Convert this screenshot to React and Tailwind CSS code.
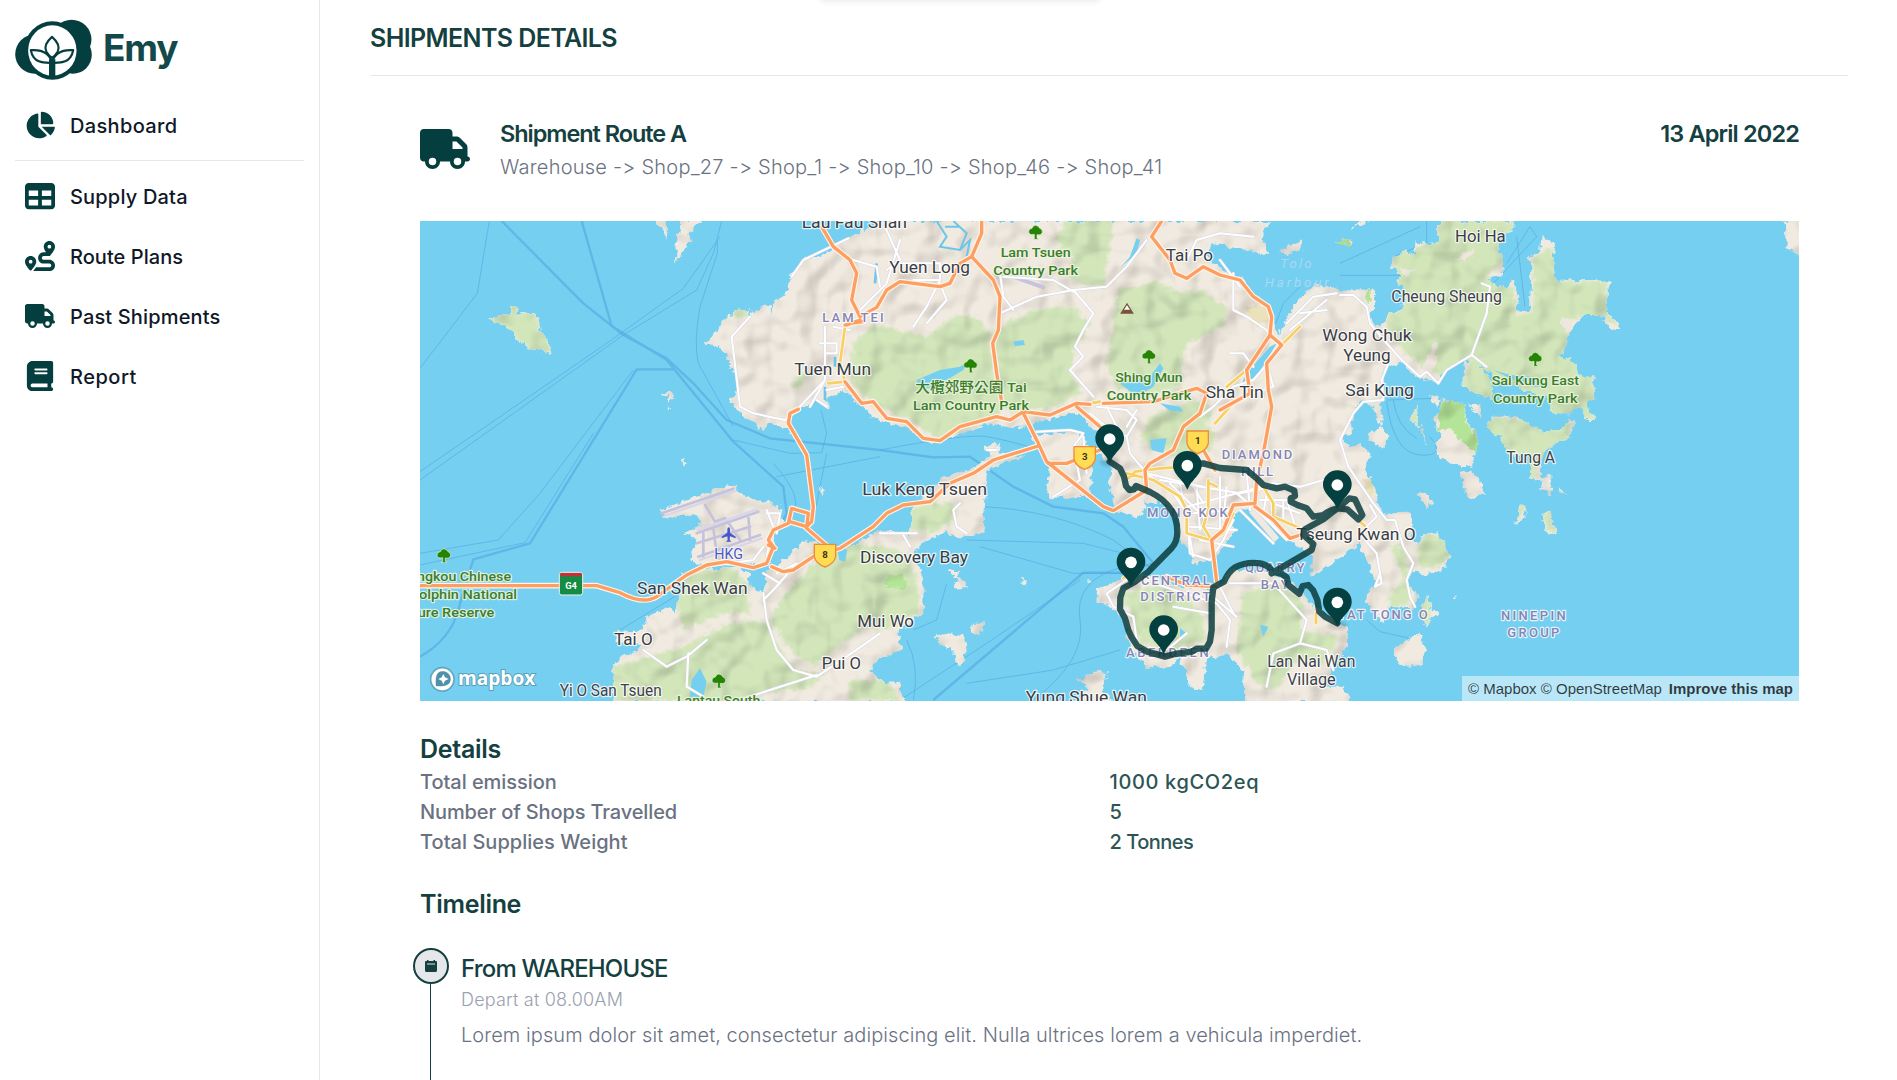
import React from "react";
import { FaBook, FaChartPie, FaRoute, FaTable, FaTruck } from "react-icons/fa6";

const NAV = [
  { label: "Supply Data", Icon: FaTable, tracking: "tracking-[0.18px]" },
  { label: "Route Plans", Icon: FaRoute, tracking: "tracking-[0.05px]" },
  { label: "Past Shipments", Icon: FaTruck, tracking: "tracking-[0.15px]" },
  { label: "Report", Icon: FaBook, tracking: "tracking-[0.5px]" },
];

const DETAILS = [
  ["Total emission", "1000 kgCO2eq", "tracking-[-0.05px]", "tracking-[0.65px]"],
  ["Number of Shops Travelled", "5", "tracking-[-0.13px]", "tracking-normal"],
  ["Total Supplies Weight", "2 Tonnes", "tracking-[0.03px]", "tracking-[-0.5px]"],
];

function NavItem({ label, Icon, tracking }) {
  return (
    <a className="flex h-[60px] items-center gap-[15px] pl-[25px] text-[20px] font-medium text-gray-900">
      <Icon className="h-[30px] w-[30px] text-[#053e3e]" />
      <span className={`pt-[2px] ${tracking}`}>{label}</span>
    </a>
  );
}

function Logo() {
  return (
    <svg viewBox="45 58 231 184" className="h-[61px] w-[77px]" fill="#053e3e">
      <circle cx="104" cy="164" r="59" />
      <circle cx="215" cy="120" r="60" />
      <circle cx="219" cy="166" r="57" />
      <ellipse cx="157" cy="153" rx="85" ry="88" />
      <ellipse cx="157" cy="153" rx="73" ry="76" fill="#fff" />
      <g fill="#fff" stroke="#053e3e" strokeWidth="6.5" strokeLinejoin="round">
        <path d="M156 112C140 126 131 142 139 157Q146 169 156 175Q166 169 173 157C181 142 172 126 156 112Z" />
        <path d="M92 152C120 150 148 156 156 190C128 191 100 190 92 152Z" />
        <path d="M220 152C192 150 164 156 156 190C184 191 212 190 220 152Z" />
      </g>
      <path d="M147 179Q156 183 166 179V234H147Z" />
    </svg>
  );
}

const COASTS = [
  // North-western mainland, joined with the New Territories and Kowloon
  "M1390 3L1330 35 1285 55 1230 95 1150 120 1115 160 1105 210 1060 250 1055 285 1048 252 1005 270 985 292 990 268 945 273 920 295 855 370 915 385 925 430 950 470 955 510 930 545 975 590 1035 635 1045 605 1095 625 1112 638 1102 600 1140 570 1190 540 1230 570 1215 535 1270 510 1310 545 1370 600 1460 625 1530 668 1595 650 1710 612 1780 625 1870 602 1970 578 2030 640 2040 700 2075 740 2070 800 2100 820 2180 850 2210 840 2275 880 2280 960 2305 985 2320 1030 2380 1015 2440 940 2435 890 2470 865 2530 885 2620 970 2680 1010 2670 1075 2760 1010 2820 970 2830 1000 2870 1090 2835 1140 2890 1210 2910 1160 2975 1165 3000 1130 2960 1090 2975 1050 3020 1065 3080 1040 3090 1000 3050 940 3010 945 3000 970 2975 960 2975 900 2960 870 2900 885 2870 850 2865 800 2835 750 2850 700 2825 675 2790 680 2760 650 2790 640 2805 580 2820 545 2860 555 2880 620 2840 650 2890 690 2905 650 2885 620 2880 545 2890 545 2885 480 2900 440 2940 430 2990 470 3030 480 3055 490 3075 450 3140 415 3130 500 3220 540 3210 470 3160 430 3210 460 3310 510 3380 530 3400 580 3450 580 3480 560 3500 600 3523 600 3500 550 3523 540 3520 470 3480 470 3460 425 3410 405 3430 395 3450 330 3495 285 3540 285 3575 330 3600 325 3560 270 3560 230 3570 190 3530 180 3410 182 3400 120 3405 75 3365 50 3360 95 3320 115 3335 130 3330 275 3290 270 3295 220 3275 175 3260 210 3200 180 3245 160 3250 130 3235 90 3235 45 3280 35 3280 3 3060 3 3050 30 3060 60 3035 70 2990 65 2985 105 2960 95 2920 110 2910 140 2940 165 2925 180 2950 200 2960 250 2900 290 2885 320 2855 310 2845 275 2865 270 2865 215 2830 205 2760 210 2690 190 2630 240 2600 290 2575 350 2555 270 2500 220 2470 180 2400 145 2360 110 2380 70 2470 90 2545 105 2525 50 2550 3Z",
  // Lantau
  "M580 1445V1330L650 1290 670 1270 590 1270 590 1235 670 1225 680 1190 750 1160 770 1180 775 1130 800 1090 790 1060 850 1050 950 1040 990 1055 985 1090 1030 1120 1040 1060 1090 1020 1160 960 1200 975 1250 1000 1380 930 1470 940 1480 860 1560 780 1670 740 1710 710 1695 680 1740 670 1735 700 1820 712 1760 722 1700 755 1690 940 1620 955 1580 935 1530 960 1480 990 1510 1080 1510 1180 1460 1215 1430 1240 1450 1290 1380 1310 1350 1350 1390 1390 1440 1385 1450 1445Z",
  // Airport island
  "M718 870L935 793 975 830 1050 850 1090 870 1085 905 1060 930 1065 980 1045 1030 960 1035 820 1030 815 1005 830 960 790 940 845 915 835 885 730 893Z",
  // Tsing Yi
  "M1835 650L1970 630 2010 690 2015 790 2000 830 1895 835 1880 810 1890 740 1860 700Z",
  "M2070 800L2120 780 2180 860 2150 895 2085 870Z",
  // Hong Kong Island
  "M2030 1110L2100 1080 2130 1060 2200 1070 2280 1100 2390 1110 2430 1050 2530 1050 2620 1090 2670 1150 2710 1180 2785 1220 2780 1290 2740 1320 2720 1400 2770 1400 2790 1445 2470 1445 2475 1360 2420 1300 2360 1320 2345 1410 2310 1400 2280 1310 2240 1345 2180 1340 2130 1290 2110 1200 2070 1160 2030 1150Z",
  // Outlying islands
  "M710 3L740 60 740 3Z M785 3L770 75 768 125 815 60 805 40 845 3Z",
  "M200 295L270 285 270 255 288 258 292 285 335 275 355 300 362 335 395 370 395 402 330 385 290 360 285 335 240 310Z",
  "M720 515L755 520 760 535 750 545 740 530Z M742 560L753 565 745 578Z M783 720L795 718 789 742Z M1200 800L1212 812 1203 822Z",
  "M1580 1050L1620 1050 1610 1070 1640 1085 1640 1105 1600 1105 1615 1080Z M1800 1085L1815 1075 1820 1095Z M2000 1080L2010 1076 2015 1088Z",
  "M1650 1225L1670 1205 1695 1205 1685 1235 1660 1242Z M1540 1250L1590 1240 1635 1250 1640 1290 1620 1340 1600 1300Z M1970 1380L2010 1365 2030 1350 2060 1360 2050 1410 2080 1445 1980 1445 2000 1400Z",
  "M3065 640L3040 600 3060 570 3070 540 3130 550 3140 600 3175 660 3170 690 3155 740 3110 735 3055 710 3050 670Z M3030 530L3055 525 3060 545 3045 560Z M3145 545L3185 560 3183 600 3165 575Z",
  "M2990 555L2995 600 3015 675 3010 630 2970 600Z M3120 760L3150 752 3175 775 3195 825 3150 838 3130 800Z M2990 820L3010 815 3038 850 3020 862Z",
  "M3215 590L3290 590 3310 605 3360 635 3420 630 3450 590 3465 610 3440 660 3390 680 3370 700 3360 780 3330 775 3330 700 3270 705 3245 660 3200 625Z",
  "M3360 770L3390 765 3395 820 3365 810Z M3285 910L3300 850 3320 870 3315 895Z M3365 880L3385 875 3400 910 3410 945 3390 945 3370 915Z M3415 805L3440 825 3425 825Z",
  "M2925 1280L2960 1260 3005 1240 3015 1290 3005 1335 2965 1340 2925 1320Z M3000 1180L3020 1120 3035 1165 3060 1190 3025 1195 3020 1225Z M3098 1130L3110 1130 3106 1143Z",
  "M4090 3H4140V105L4100 85 4098 20Z M2580 90L2650 60 2640 90 2600 105Z M2740 70L2790 55 2795 75Z M2790 30L2820 3 2850 3Z",
];

const GREENS = [
  "M2050 200L2080 3 1940 3 1900 60 1960 110 1940 170 1990 190Z",
  "M1720 330L1840 270 1960 260 2010 310 1960 400 1950 460 1990 520 1900 560 1800 580 1740 560Z",
  "M1380 320L1430 330 1520 350 1600 290 1670 290 1710 340 1720 480 1740 580 1600 640 1540 650 1470 600 1380 560 1320 520 1290 470 1300 370 1370 310Z",
  "M2090 210L2160 200 2210 180 2280 220 2340 210 2420 260 2410 320 2300 370 2290 430 2280 500 2160 530 2090 500 2060 430 2080 320Z",
  "M2190 590L2330 540 2380 560 2340 660 2200 690 2160 650Z",
  "M2240 620L2340 610 2390 640 2370 690 2280 720 2240 690Z",
  "M800 1060L940 1045 980 1100 990 1180 900 1180 790 1230 770 1140Z",
  "M580 1340L760 1290 830 1260 930 1210 1040 1200 1080 1290 1130 1350 1210 1360 1180 1400 1040 1420 960 1440 580 1440Z",
  "M1090 1130L1180 1030 1300 970 1380 980 1460 1000 1490 1080 1500 1180 1400 1230 1330 1220 1230 1300 1180 1340 1120 1300 1050 1200Z",
  "M1400 890L1540 850 1600 850 1600 900 1540 940 1420 925Z M1290 1380L1400 1380 1440 1440 1290 1440Z",
  "M2110 1120L2230 1090 2300 1130 2350 1190 2350 1270 2240 1290 2160 1270 2130 1190Z",
  "M2470 1120L2570 1090 2650 1150 2640 1230 2700 1240 2760 1250 2720 1320 2620 1330 2570 1410 2510 1390 2450 1290Z",
  "M2910 975L2950 980 2970 1060 2970 1150 2910 1165 2900 1140 2950 1080Z M3010 950L3060 945 3090 1000 3060 1040 3000 1045 2990 1000Z",
  "M3060 3H3280V35L3235 60 3250 120 3200 170 3280 200 3290 290 3340 275 3340 110 3400 80 3410 185 3560 185 3560 270 3600 325 3540 285 3450 300 3430 395 3520 470 3523 600 3400 580 3200 540 3130 500 3150 410 3060 470 3010 440 2960 400 2900 330 2900 290 2960 250 2930 180 2920 110 3050 60Z",
  "M3200 590L3310 600 3460 610 3440 660 3370 700 3340 780 3200 650Z",
  "M2990 555L2995 600 3015 675 3010 630 2970 600Z M3000 1180L3020 1120 3035 1165 3020 1225Z M3285 910L3300 850 3320 870Z M3365 880L3385 875 3410 945 3370 915Z",
  "M200 295L270 285 270 255 288 258 292 285 335 275 355 300 362 335 395 370 395 402 330 385 290 360 285 335Z",
  "M1110 500L1150 450 1160 480 1130 505Z M2770 555L2870 560 2850 580Z M945 273L985 268 985 292 945 290Z",
];

const BEIGE_GAPS = [
  "M3010 440L3040 370 3050 365 3045 430 3030 470Z M3160 110L3110 120 3130 100 3165 85Z M3420 290L3460 300 3440 340Z M2940 145L2980 150 2960 175Z",
];

const LAKES = [
  "M1490 480L1560 450 1620 440 1640 428 1630 450 1580 480 1540 500 1500 510Z",
  "M2100 490L2190 470 2220 430 2230 445 2200 500 2150 530Z",
  "M2190 660L2240 655 2230 700 2195 690Z M1780 365L1810 360 1815 375 1785 378Z",
  "M2220 550L2280 560 2290 575 2250 572Z M2520 1215L2545 1220 2530 1250Z M2280 1225L2300 1240 2280 1260Z",
  "M815 1380L840 1345 860 1385 850 1430 810 1430Z M1250 975L1282 990 1275 1025 1258 1020Z",
  "M2480 460L2550 380 2570 370 2510 470 2460 500Z",
  "M2150 100L2160 60 2150 55 2130 110 2100 145Z",
  "M3220 450L3280 480 3340 500 3380 500 3340 470 3270 465Z",
];

const FERRIES_WIDE = [
  "M245 3L490 250 610 345 740 415 820 490 920 600 1050 655 1380 690 1540 712 1650 710 1780 800 1900 860 2050 880 2110 920 2200 1030",
  "M485 3L575 318 740 420 830 530 940 665 1090 800 1100 880 1090 900",
  "M0 1310Q90 1260 115 1170T160 1018L330 970 650 448H760",
  "M1540 1440L1990 1058 2110 1058 2200 1030",
];
const FERRIES = [
  "M208 3L172 220 0 445",
  "M905 3L880 100 830 210 610 345 0 780",
  "M900 50L790 205 560 370 0 755",
  "M892 60V100L840 260Q820 370 835 430L940 620",
  "M0 1000L235 960 360 820 640 450",
  "M0 1035L315 968 520 640",
  "M940 660L1110 700 1205 698 1220 640 1203 570",
  "M1070 770L1380 710 M1060 730Q1150 830 1120 880M1220 700L1180 900",
  "M600 1230L780 1120 M600 1140",
  "M1640 960L1990 970 2110 1000 M1680 980L1960 1060 2110 1060",
  "M1440 1440L1700 1270 1980 1080 M2110 1040Q1960 1080 1980 1200T1840 1440",
  "M1640 1390L1900 1350 2100 1290",
  "M1480 1440Q1500 1340 1460 1260M1580 1090L1550 1200 1480 1230",
  "M1380 690Q1640 640 1700 650T1860 690",
  "M1690 860Q1900 870 2080 960L2200 1050",
  "M2760 130L3000 20 M2760 166H2940 M3020 3V70L2920 110M3220 190L3350 50 3330 20 3260 130",
  "M2900 545Q2920 700 3000 705T3030 650M2920 540Q2930 620 2990 655M2900 540L3040 535",
  "M3290 50L3315 260M2840 1200L2880 1235 2970 1255",
  "M2560 330L2590 250 2640 200",
];

const MINOR_ROADS = [
  "M1285 55L1150 120 1115 170M990 290L935 350 960 560 1000 580 1095 600 1140 560 1215 480",
  "M1215 320V480L1170 560M1200 370H1250V400H1215M1240 320L1290 330M1190 540L1220 560M1220 510L1270 500",
  "M1320 270L1400 190 1440 60M1300 120L1370 140 1380 200M1395 20L1440 120 1400 150M1440 130H1560V180H1480",
  "M1740 280L1850 230 1960 210 2060 200 2120 140 2180 60M1960 210L2020 280 1990 330 1965 380 1990 410 1950 450 2020 530",
  "M1560 180L1520 260 1480 320M1560 190L1580 240 1520 310M1740 160L1750 230 1780 270M1750 170L1900 180 1960 215",
  "M2300 120L2330 60 2400 40 2500 50M2440 160V270L2480 290 2540 330 2550 350M2400 120L2460 200",
  "M2570 400L2500 480 2440 500 2380 560 2340 590M2430 400L2470 400 2500 440M2540 430L2560 500 2500 520",
  "M2600 310L2680 230 2750 220M2610 330L2720 240M2640 280L2720 270",
  "M2760 225L2800 225 2840 260 2850 310 2900 370 2945 420 3000 470 3020 455 3055 490 3080 450 3155 405 3200 440M3155 405L3200 280 3210 200 3185 190",
  "M2905 430L2885 480 2890 540 2830 545 2800 580 2760 660 2785 740 2860 850 2900 900 2925 900 2950 980 2980 1030 2960 1080 2970 1130 2985 1160",
  "M2835 960L2870 1000 2885 1090 2865 1100 2880 1060M2810 900L2840 920 2870 890 2850 855",
  "M1620 850L1600 870 1610 920 1640 940M1700 690L1730 690M1380 940L1490 940M1450 945L1470 980",
  "M670 1290L740 1340 800 1310 860 1260M805 1300L800 1400 850 1430M1030 1120L1040 1200 1070 1290 1120 1350 1190 1370 1280 1310 1380 1240M1190 1365L1050 1410 960 1440",
  "M850 1040L1000 1020 1030 980M1040 870L1060 920 1040 1010M1040 880H1080L1070 940M1070 1060L1130 1030 1060 1110 1030 1140M1080 1090L1030 1060",
  "M1850 635L1950 630 1990 640 1960 680 1980 780 1900 830M1990 650L2000 760",
  "M2010 580L2060 620 2120 650 2130 700 2180 760 2300 790 2350 800M2030 560L2120 570 2150 600 2120 650M2060 560L2090 620M2150 570L2120 620",
  "M2180 760L2260 820 2300 880 2310 1000 2370 1020 2410 960 2440 900M2220 780L2460 820 2560 800M2300 860L2560 790 2640 800 2710 780",
  "M2280 790L2320 1010M2400 770L2400 940M2330 800L2340 930M2340 960L2440 980M2310 920L2450 930M2320 880L2440 870M2420 800L2410 900",
  "M2250 790L2360 900M2290 750L2350 850M2480 760L2490 870M2540 820L2530 880M2450 820L2520 880 2600 960",
  "M2500 850L2570 930M2460 870L2560 970M2520 840L2600 840 2630 930M2590 840V900M2560 850L2640 880",
  "M2120 1080L2060 1120 2080 1160 2140 1190 2150 1260M2200 1090L2390 1150 2430 1200 2420 1280M2380 1130L2450 1190M2400 1100L2440 1180",
  "M2430 1090L2560 1090 2660 1200 2640 1270 2560 1300 2540 1400M2640 1270L2720 1290 2740 1350M2260 1160L2370 1180M2240 1290L2300 1240",
];

const HIGHWAYS = [
  "M0 1097H530L600 1118Q670 1155 710 1130L800 1065 860 1035 920 1025 1000 1043 1040 1030 1060 980 1045 960 1060 930 1105 910 1115 865 1165 880 1160 920 1110 905M1045 975L1065 985",
  "M1160 920L1175 905 1180 860 1160 705 1105 610 1110 580 1135 568M1160 925L1230 985M1055 1040L1090 1055 1120 1050 1180 1010 1260 985 1360 920 1400 880 1450 855 1530 845 1590 790 1660 760 1720 720 1855 678",
  "M1205 20L1240 80 1290 120 1310 160 1295 240 1320 290 1370 262 1400 210 1440 185 1560 200 1590 190 1620 130 1655 110 1685 40V3",
  "M1655 110L1720 180 1740 230 1735 330 1718 370 1730 460 1745 545",
  "M1280 315L1320 300M1275 485L1325 550 1360 545 1400 595 1460 605 1510 655 1560 662 1620 620 1730 590 1770 600 1810 575 1890 585 1970 550 2010 553M1275 315L1290 310 1330 305",
  "M1810 580L1855 670 1880 725 2050 860 2080 872 2180 810 2175 750 2190 730 2260 690 2290 620 2340 580 2360 520 2330 505 2280 520 2200 545 2050 550",
  "M1885 730H1940L2040 690M1970 560L2040 620",
  "M2225 3L2195 50 2250 120 2265 160 2300 175 2350 140 2400 165 2460 180 2500 230 2545 260 2555 290 2550 345 2480 450 2490 520 2400 570M2550 345L2585 375M2585 375L2540 430 2545 510 2555 560 2530 700 2510 780 2505 850 2440 855 2410 930 2375 960 2390 1085 M2505 860L2560 900 2610 955 2640 945",
  "M2350 690L2385 750M2240 1070L2300 1095 2390 1100",
];
const YELLOW_ROADS = [
  "M1275 320L1260 430 1275 485 1225 490M2010 550L2040 545M2420 500L2480 450M2385 610L2430 560 2500 510M2590 370L2640 320",
  "M2120 760L2200 780 2280 830 2300 870 2300 940 2370 960 2410 940 2440 880M2125 775L2145 755 2220 745 2300 740M2365 780V870L2350 920 2375 960M2530 800L2560 850 2560 890 2640 925M2820 905L2835 918M2688 1180V1210M2110 1075L2125 1060M2370 790L2390 800",
];

// [text, centre x, baseline, width, kind]
const LABELS = [
  ["Lau Fau Shan", 1303, 24, 316, "place"],
  ["Yuen Long", 1529, 158, 242, "place"],
  ["Tai Po", 2308, 123, 142, "place"],
  ["Tuen Mun", 1238, 466, 230, "place"],
  ["Sha Tin", 2444, 533, 174, "place"],
  ["Luk Keng Tsuen", 1514, 825, 374, "place"],
  ["Discovery Bay", 1482, 1030, 324, "place"],
  ["San Shek Wan", 817, 1122, 332, "place"],
  ["Tai O", 640, 1276, 116, "place"],
  ["Mui Wo", 1397, 1222, 170, "place"],
  ["Pui O", 1264, 1348, 118, "place"],
  ["Yi O San Tsuen", 572, 1428, 306, "small"],
  ["Yung Shue Wan", 1999, 1450, 364, "place"],
  ["Wong Chuk", 2841, 362, 268, "place"],
  ["Yeung", 2841, 422, 142, "place"],
  ["Sai Kung", 2879, 527, 206, "place"],
  ["Hoi Ha", 3181, 66, 152, "place"],
  ["Cheung Sheung", 3080, 247, 332, "small"],
  ["Tung A", 3332, 729, 146, "small"],
  ["Tseung Kwan O", 2808, 961, 358, "place"],
  ["Lan Nai Wan", 2674, 1341, 264, "small"],
  ["Village", 2674, 1396, 146, "small"],
  ["Lam Tsuen", 1847, 112, 210, "park"],
  ["Country Park", 1847, 166, 254, "park"],
  ["大欖郊野公園 Tai", 1653, 515, 334, "park"],
  ["Lam Country Park", 1653, 569, 348, "park"],
  ["Shing Mun", 2187, 487, 202, "park"],
  ["Country Park", 2187, 541, 254, "park"],
  ["Sai Kung East", 3346, 494, 262, "park"],
  ["Country Park", 3346, 548, 254, "park"],
  ["ngkou Chinese", 132, 1083, 282, "park"],
  ["olphin National", 144, 1137, 294, "park"],
  ["ure Reserve", 108, 1191, 230, "park"],
  ["Lantau South", 896, 1456, 250, "park"],
  ["LAM TEI", 1299, 306, 184, "district"],
  ["DIAMOND", 2511, 717, 212, "district"],
  ["HILL", 2511, 768, 96, "district"],
  ["MONG KOK", 2302, 892, 242, "district"],
  ["CENTRAL", 2266, 1094, 206, "district"],
  ["DISTRICT", 2266, 1144, 210, "district"],
  ["QUARRY", 2564, 1056, 178, "district"],
  ["BAY", 2564, 1106, 84, "district"],
  ["ABERDEEN", 2242, 1312, 248, "district"],
  ["TAT TONG O", 2888, 1197, 270, "district"],
  ["NINEPIN", 3340, 1201, 194, "district"],
  ["GROUP", 3340, 1251, 156, "district"],
  ["HKG", 926, 1016, 86, "airport"],
  ["Tolo", 2628, 143, 94, "water"],
  ["Harbour", 2630, 201, 192, "water"],
];

const LABEL_STYLE = {
  place: "fill-[#3a3d44] stroke-[#ffffffcc] text-[49px] font-normal",
  small: "fill-[#3f4248] stroke-[#ffffffcc] text-[47px] font-normal",
  park: "fill-[#3c7d2c] stroke-[#ecf5dfdd] text-[41px] font-medium",
  district: "fill-[#8685b3] stroke-[#ffffffcc] text-[39px] font-medium",
  airport: "fill-[#4a5ac6] stroke-[#ffffffaa] text-[44px] font-normal",
  water: "fill-[#a9d9f3] stroke-[#75cff000] text-[40px] italic",
};

const TREES = [
  [1847, 38], [1652, 438], [2187, 411], [3346, 419], [72, 1008], [897, 1384],
];

const PINS = [
  [2069, 657], [2302, 737], [2133, 1027], [2231, 1230], [2752, 795], [2752, 1147],
];

function Shield({ x, y, n }) {
  return (
    <g transform={`translate(${x} ${y})`}>
      <path d="M-32-32H32V5Q27 27 0 36Q-27 27-32 5Z" fill="#ffdc52" stroke="#f08a3c" strokeWidth="4" />
      <text textAnchor="middle" y="8" className="fill-[#3b3516] text-[29px] font-bold">{n}</text>
    </g>
  );
}

function RouteMap() {
  return (
    <svg viewBox="0 3 4137 1440" className="block h-[480px] w-[1379px] font-['Roboto','Noto_Sans_CJK_TC',sans-serif]">
      <defs>
        <filter id="relief" x="0" y="0" width="4137" height="1443" filterUnits="userSpaceOnUse" colorInterpolationFilters="sRGB">
          <feTurbulence type="fractalNoise" baseFrequency="0.05" numOctaves="3" seed="4" result="rough" />
          <feDisplacementMap in="SourceGraphic" in2="rough" scale="26" xChannelSelector="R" yChannelSelector="G" result="coast" />
          <feTurbulence type="fractalNoise" baseFrequency="0.011" numOctaves="2" seed="9" result="hills" />
          <feDiffuseLighting in="hills" surfaceScale="34" diffuseConstant="1.1" lightingColor="#ffffff" result="lit">
            <feDistantLight azimuth="225" elevation="62" />
          </feDiffuseLighting>
          <feColorMatrix in="lit" values="0.24 0 0 0 0.755 0 0.24 0 0 0.755 0 0 0.24 0 0.745 0 0 0 1 0" result="soft" />
          <feBlend in="coast" in2="soft" mode="multiply" result="shade" />
          <feComposite in="shade" in2="coast" operator="in" />
        </filter>
        <filter id="feather" x="-5%" y="-5%" width="110%" height="110%"><feGaussianBlur stdDeviation="5" /></filter>
        <clipPath id="land">{COASTS.map((d) => <path key={d} d={d} />)}</clipPath>
      </defs>
      <rect y="3" width="4137" height="1440" fill="#75cff0" />

      <g fill="none" stroke="#4a9ee0" strokeLinejoin="round">
        <g strokeWidth="7" opacity="0.5">{FERRIES_WIDE.map((d) => <path key={d} d={d} />)}</g>
        <g strokeWidth="3" opacity="0.5">{FERRIES.map((d) => <path key={d} d={d} />)}</g>
      </g>

      <g filter="url(#relief)">
        <g fill="#f2ebe3">{COASTS.map((d) => <path key={d} d={d} />)}</g>
        <g clipPath="url(#land)">
          <g fill="#d3e7bd" filter="url(#feather)">{GREENS.map((d) => <path key={d} d={d} />)}</g>
          <g fill="#f0e8e0">{BEIGE_GAPS.map((d) => <path key={d} d={d} />)}</g>
          <path fill="#b5e59a" d="M3050 570L3080 540 3130 550 3140 610 3175 660 3170 695 3120 660 3095 630 3060 635Z M2740 70L2790 50 2790 90Z M2835 225L2850 205 2855 240 2840 250Z M1400 1070L1450 1060 1460 1100 1400 1105Z" />
          <path fill="#e9dfae" d="M2470 260L2540 260 2550 300 2510 320Z M2830 770L2860 780 2860 830 2830 800Z" opacity=".7" />
        </g>
      </g>
      <g fill="#75cff0">{LAKES.map((d) => <path key={d} d={d} />)}</g>
      <path d="M1550 3L1580 50 1560 80 1620 90 1650 60 1640 110M1600 3L1640 40 1620 90M1575 20H1620M1655 110L1700 160" fill="none" stroke="#6cc6ea" strokeWidth="6" />
      <path d="M1370 130L1365 190M1215 500V540M1245 410V440" stroke="#6cc6ea" strokeWidth="8" />
      <path d="M2495 870L2570 960" stroke="#efe9e1" strokeWidth="20" />

      <g fill="none" strokeLinejoin="round" strokeLinecap="round">
        <path d="M725 880L940 806M855 855L885 905 915 895M830 940L1015 875M835 1010L1020 945M830 970L990 920M850 940V1010M880 925L890 1000M920 900L960 960M985 885L990 960" stroke="#c5c2dc" strokeWidth="8" />
        <path d="M732 888L944 814M835 930L1010 868M840 1020L1024 955" stroke="#d9d6e8" strokeWidth="7" />
        <path d="M1780 170L1870 202" stroke="#c8c3dd" strokeWidth="12" />
        <g stroke="#d7d7e4" strokeWidth="9">{MINOR_ROADS.map((d) => <path key={d} d={d} />)}</g>
        <g stroke="#ffffff" strokeWidth="6">{MINOR_ROADS.map((d) => <path key={d} d={d} />)}</g>
        <g stroke="#fff8ee" strokeWidth="13">{YELLOW_ROADS.map((d) => <path key={d} d={d} />)}</g>
        <g stroke="#f7cf62" strokeWidth="8">{YELLOW_ROADS.map((d) => <path key={d} d={d} />)}</g>
        <g stroke="#fff3e6" strokeWidth="17">{HIGHWAYS.map((d) => <path key={d} d={d} />)}</g>
        <g stroke="#fd9f63" strokeWidth="10">{HIGHWAYS.map((d) => <path key={d} d={d} />)}</g>
      </g>

      {TREES.map(([x, y]) => (
        <path key={`${x}-${y}`} transform={`translate(${x} ${y})`} d="M-4 18V5Q-21 9-21-4Q-19-13-11-13Q-8-22 0-22Q9-21 12-13Q21-11 20-1Q17 9 4 6V16L9 20H-9Z" fill="#268405" stroke="#e6f3d8" strokeWidth="2" />
      ))}
      <path d="M2121 252L2104 279H2138Z" fill="#fff" stroke="#79513c" strokeWidth="4" />
      <path d="M2111 269H2131L2138 279H2104Z" fill="#79513c" />
      <path d="M926 922Q930 922 930 932V938L947 950V955L930 949 929 960 934 965H918L923 960 922 949 905 955V950L922 938V932Q922 922 926 922Z" fill="#4257cc" />

      {LABELS.map(([text, x, y, width, kind]) => (
        <text key={text + x + y} x={x - width / 2} y={y} textLength={width} strokeWidth="7" strokeLinejoin="round" paintOrder="stroke" lengthAdjust={kind === "district" || kind === "water" ? "spacing" : "spacingAndGlyphs"} className={LABEL_STYLE[kind]}>
          {text}
        </text>
      ))}

      <Shield x={1215} y={1005} n="8" />
      <Shield x={1994} y={712} n="3" />
      <Shield x={2333} y={665} n="1" />
      <rect x="418" y="1057" width="70" height="68" rx="7" fill="#158c43" stroke="#e8f4ec" strokeWidth="3" />
      <path d="M420 1069V1064Q420 1059 426 1059H480Q486 1059 486 1064V1069Z" fill="#c82f36" />
      <text x="453" y="1107" textAnchor="middle" className="fill-white text-[28px] font-bold">G4</text>

      <g transform="translate(1920 540)" fill="none" stroke="#0a3c3d" strokeOpacity="0.85" strokeWidth="19" strokeLinejoin="round" strokeLinecap="round">
        <path d="M149 185L180 205 192 230 198 258 208 270 222 268 228 258 270 276Q315 298 335 332Q352 360 352 395Q352 425 335 444L265 515 225 545 190 565 181 592 180 628 195 655 205 690 215 712 232 738 262 755 315 770 345 762 395 755 410 746 438 746 450 725 455 690V605L460 562 492 545Q505 515 525 502Q560 484 600 490Q625 495 640 516L665 522 680 532 685 555 718 581 728 558 745 555 760 572 772 600 778 635 795 650 832 670M635 520L755 450 760 432 730 405 735 388 790 358 832 325 862 328 895 358 907 345 885 298 868 295 832 325Q812 328 790 345L760 350 740 325 712 315 692 305 692 295 705 288 703 272 675 260 650 265 610 255 590 235 560 210 480 204 430 190 395 195" />
      </g>

      {PINS.map(([x, y]) => (
        <g key={`${x}-${y}`} transform={`translate(${x} ${y})`}>
          <ellipse cx="1" cy="70" rx="30" ry="13" fill="#000" opacity=".13" filter="url(#feather)" />
          <path d="M0 72C-5 63-8 54-17 45C-32 28-43 16-43-2A43 42 0 0 1 43-2C43 16 32 28 17 45C8 54 5 63 0 72Z" fill="#04403f" />
          <circle r="17.5" fill="#fff" />
        </g>
      ))}

      <g stroke="#4f91a8" strokeOpacity=".75">
        <circle cx="67" cy="1378" r="35" fill="#fff" strokeWidth="5" />
        <path d="M48 1398C45 1362 54 1354 70 1354A23 23 0 0 1 92 1377C90 1396 76 1400 48 1398Z" fill="#4f91a8" strokeWidth="1" />
        <path d="M70 1362L75 1372 86 1377 75 1382 70 1393 65 1382 55 1377 65 1372Z" fill="#fff" stroke="none" />
        <text x="114" y="1395" textLength="232" lengthAdjust="spacingAndGlyphs" strokeWidth="6" paintOrder="stroke" className="fill-white font-['Open_Sans',sans-serif] text-[59px] font-bold">mapbox</text>
      </g>
    </svg>
  );
}

function TimelineEntry() {
  return (
    <div className="ml-[-7px] mt-[26px] flex">
      <div className="flex w-9 flex-col items-center">
        <div className="flex size-9 shrink-0 items-center justify-center rounded-full border-2 border-[#14403f] bg-gray-200">
          <svg viewBox="0 0 12 12" className="size-3" fill="#14403f">
            <path d="M2 1V0H3.5V1H8.5V0H10V1H11Q12 1 12 2V10.5Q12 12 10.5 12H1.5Q0 12 0 10.5V2Q0 1 1 1ZM2 3.5V4.5H10V3.5Z" fillRule="evenodd" />
          </svg>
        </div>
        <div className="mr-[1px] h-[200px] w-px bg-[#14403f]" />
      </div>
      <div className="ml-3 pt-[3px]">
        <h3 className="text-[24px] leading-9 font-medium tracking-[-0.82px] text-[#14403f]">From WAREHOUSE</h3>
        <p className="text-[18px] leading-[26px] font-light tracking-[0.2px] text-gray-400">Depart at 08.00AM</p>
        <p className="mt-[7px] text-[20px] leading-[30px] font-light tracking-[0.07px] text-gray-500">
          Lorem ipsum dolor sit amet, consectetur adipiscing elit. Nulla ultrices lorem a vehicula imperdiet.
        </p>
      </div>
    </div>
  );
}

export default function App() {
  return (
    <div className="relative flex h-[1080px] w-[1897px] overflow-hidden bg-white font-['Inter',sans-serif]">
      <div className="absolute -top-4 left-[820px] h-4 w-[280px] rounded shadow-[0_1px_6px_rgba(0,0,0,0.1)]" />
      <aside className="w-[320px] shrink-0 border-r border-gray-200">
        <div className="flex h-[95px] items-start gap-[11px] pt-[19px] pl-[15px]">
          <Logo />
          <span className="pt-[1px] text-[37px] leading-[56px] font-bold tracking-[-1.2px] text-[#14494a]">Emy</span>
        </div>
        <nav>
          <NavItem label="Dashboard" Icon={FaChartPie} tracking="tracking-[0.35px]" />
          <hr className="mr-[15px] ml-[15px] mt-[5px] mb-[5px] border-gray-200" />
          {NAV.map((item) => <NavItem key={item.label} {...item} />)}
        </nav>
      </aside>

      <main className="w-[1577px] pr-[49px] pl-[50px]">
        <h1 className="flex h-[76px] items-center border-b border-gray-200 pt-[2px] text-[25px] font-semibold tracking-[-0.6px] text-[#14403f]">
          SHIPMENTS DETAILS
        </h1>
        <div className="w-[1429px] pl-[50px]">
          <header className="flex h-[145px] pt-10">
            <FaTruck className="mt-2 h-[50px] w-[50px] text-[#053e3e]" />
            <div className="ml-[30px] flex-1">
              <h2 className="text-[23.5px] leading-9 font-semibold tracking-[-1.05px] text-[#14403f]">Shipment Route A</h2>
              <p className="text-[20px] leading-[30px] font-light tracking-[0.23px] text-gray-500 [font-feature-settings:'calt'_0]">
                Warehouse -&gt; Shop_27 -&gt; Shop_1 -&gt; Shop_10 -&gt; Shop_46 -&gt; Shop_41
              </p>
            </div>
            <time className="text-[23.5px] leading-9 font-semibold tracking-[-0.85px] text-[#14403f]">13 April 2022</time>
          </header>

          <div className="relative h-[480px] w-[1379px] overflow-hidden">
            <RouteMap />
            <div className="absolute right-0 bottom-0 flex h-[25px] w-[337px] items-center justify-between bg-white/50 px-[6px] pt-px font-['Liberation_Sans',sans-serif] text-[15px] whitespace-nowrap text-black/75">
              <span>© Mapbox © OpenStreetMap</span>
              <b>Improve this map</b>
            </div>
          </div>

          <section className="pt-[30px]">
            <h2 className="text-[25px] leading-9 font-semibold tracking-[-0.3px] text-[#14403f]">Details</h2>
            <dl className="grid grid-cols-2 text-[20px] leading-[30px] font-[450]">
              {DETAILS.map(([name, value, nameTracking, valueTracking]) => (
                <React.Fragment key={name}>
                  <dt className={`text-gray-500 ${nameTracking}`}>{name}</dt>
                  <dd className={`text-[#2c5554] ${valueTracking}`}>{value}</dd>
                </React.Fragment>
              ))}
            </dl>
          </section>

          <section className="pt-[29px]">
            <h2 className="text-[25px] leading-9 font-semibold tracking-[-0.3px] text-[#14403f]">Timeline</h2>
            <TimelineEntry />
          </section>
        </div>
      </main>
    </div>
  );
}
